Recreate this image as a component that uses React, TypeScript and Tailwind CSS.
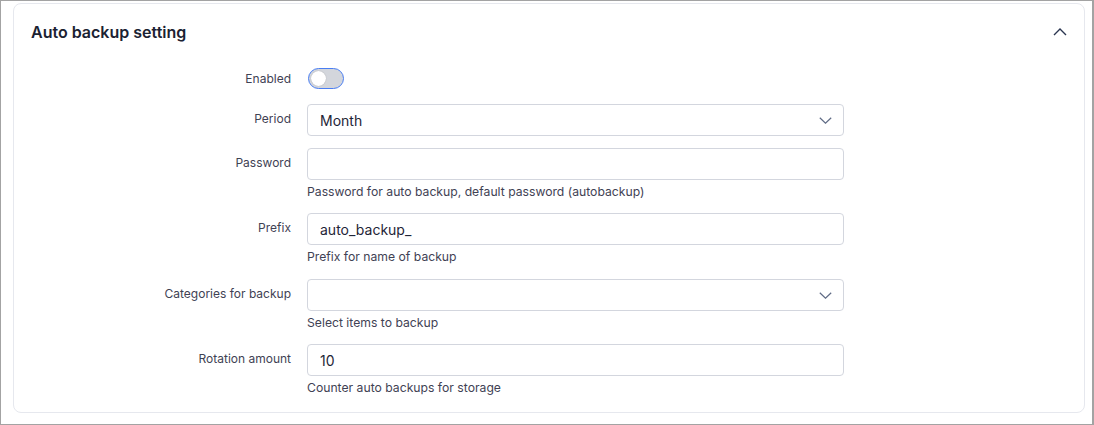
import React from "react";

function ChevronDown() {
  return (
    <svg width="13" height="7" viewBox="0 0 13 7" fill="none">
      <polyline points="0.8,0.8 6.5,6.2 12.2,0.8" stroke="#5f6b85" strokeWidth="1.2" fill="none" />
    </svg>
  );
}

function Row({
  label,
  children,
  help,
  mb,
}: {
  label: string;
  children: React.ReactNode;
  help?: string;
  mb: string;
}) {
  return (
    <div className={`flex ${mb}`}>
      <div className="w-[277px] shrink-0 text-right pt-[7px] text-[12px] leading-4 text-[#3f4254]">{label}</div>
      <div className="ml-[16px] w-[537px]">
        {children}
        {help && <div className="mt-[4px] text-[12.2px] leading-4 text-[#3f4254]">{help}</div>}
      </div>
    </div>
  );
}

function Input({ value, select }: { value?: string; select?: boolean }) {
  return (
    <div className="h-[32px] w-[537px] border border-[#d3d6de] rounded-[4px] bg-white flex items-center justify-between pl-[12px] pr-[11px] text-[14px] text-[#1f2537]">
      <span>{value ?? ""}</span>
      {select && <ChevronDown />}
    </div>
  );
}

export default function App() {
  return (
    <div
      className="w-[1094px] h-[425px] bg-white border-l border-t border-r-2 border-b border-[#a3a3a3] pl-[12px] pt-[2px]"
      style={{ fontFamily: "Inter, 'Noto Sans', sans-serif" }}
    >
      <div className="w-[1072px] h-[410px] border border-[#e6e8ee] rounded-[8px] bg-white">
        <div className="h-[56px] flex items-center justify-between pl-[17px] pr-[17px]">
          <div className="text-[16px] font-semibold text-[#1b2232]">Auto backup setting</div>
          <svg width="14" height="8" viewBox="0 0 14 8" fill="none">
            <polyline points="1,7 7,1 13,7" stroke="#2a3550" strokeWidth="1.4" fill="none" />
          </svg>
        </div>
        <div className="pt-[7px]">
          <div className="flex items-center h-[22px] mb-[15px]">
            <div className="w-[277px] shrink-0 text-right pt-[2px] text-[12px] leading-4 text-[#3f4254]">Enabled</div>
            <div className="ml-[17px] w-[36px] h-[21px] rounded-full border-[1.5px] border-[#4a7ef2] bg-[#d3d6dc] flex items-center pl-[2px]">
              <div className="w-[15px] h-[15px] rounded-full bg-white shadow-[0_0_1px_rgba(0,0,0,0.3)]" />
            </div>
          </div>
          <Row label="Period" mb="mb-[12px]">
            <Input value="Month" select />
          </Row>
          <Row label="Password" help="Password for auto backup, default password (autobackup)" mb="mb-[13px]">
            <Input />
          </Row>
          <Row label="Prefix" help="Prefix for name of backup" mb="mb-[14px]">
            <Input value="auto_backup_" />
          </Row>
          <Row label="Categories for backup" help="Select items to backup" mb="mb-[13px]">
            <Input select />
          </Row>
          <Row label="Rotation amount" help="Counter auto backups for storage" mb="mb-0">
            <Input value="10" />
          </Row>
        </div>
      </div>
    </div>
  );
}
